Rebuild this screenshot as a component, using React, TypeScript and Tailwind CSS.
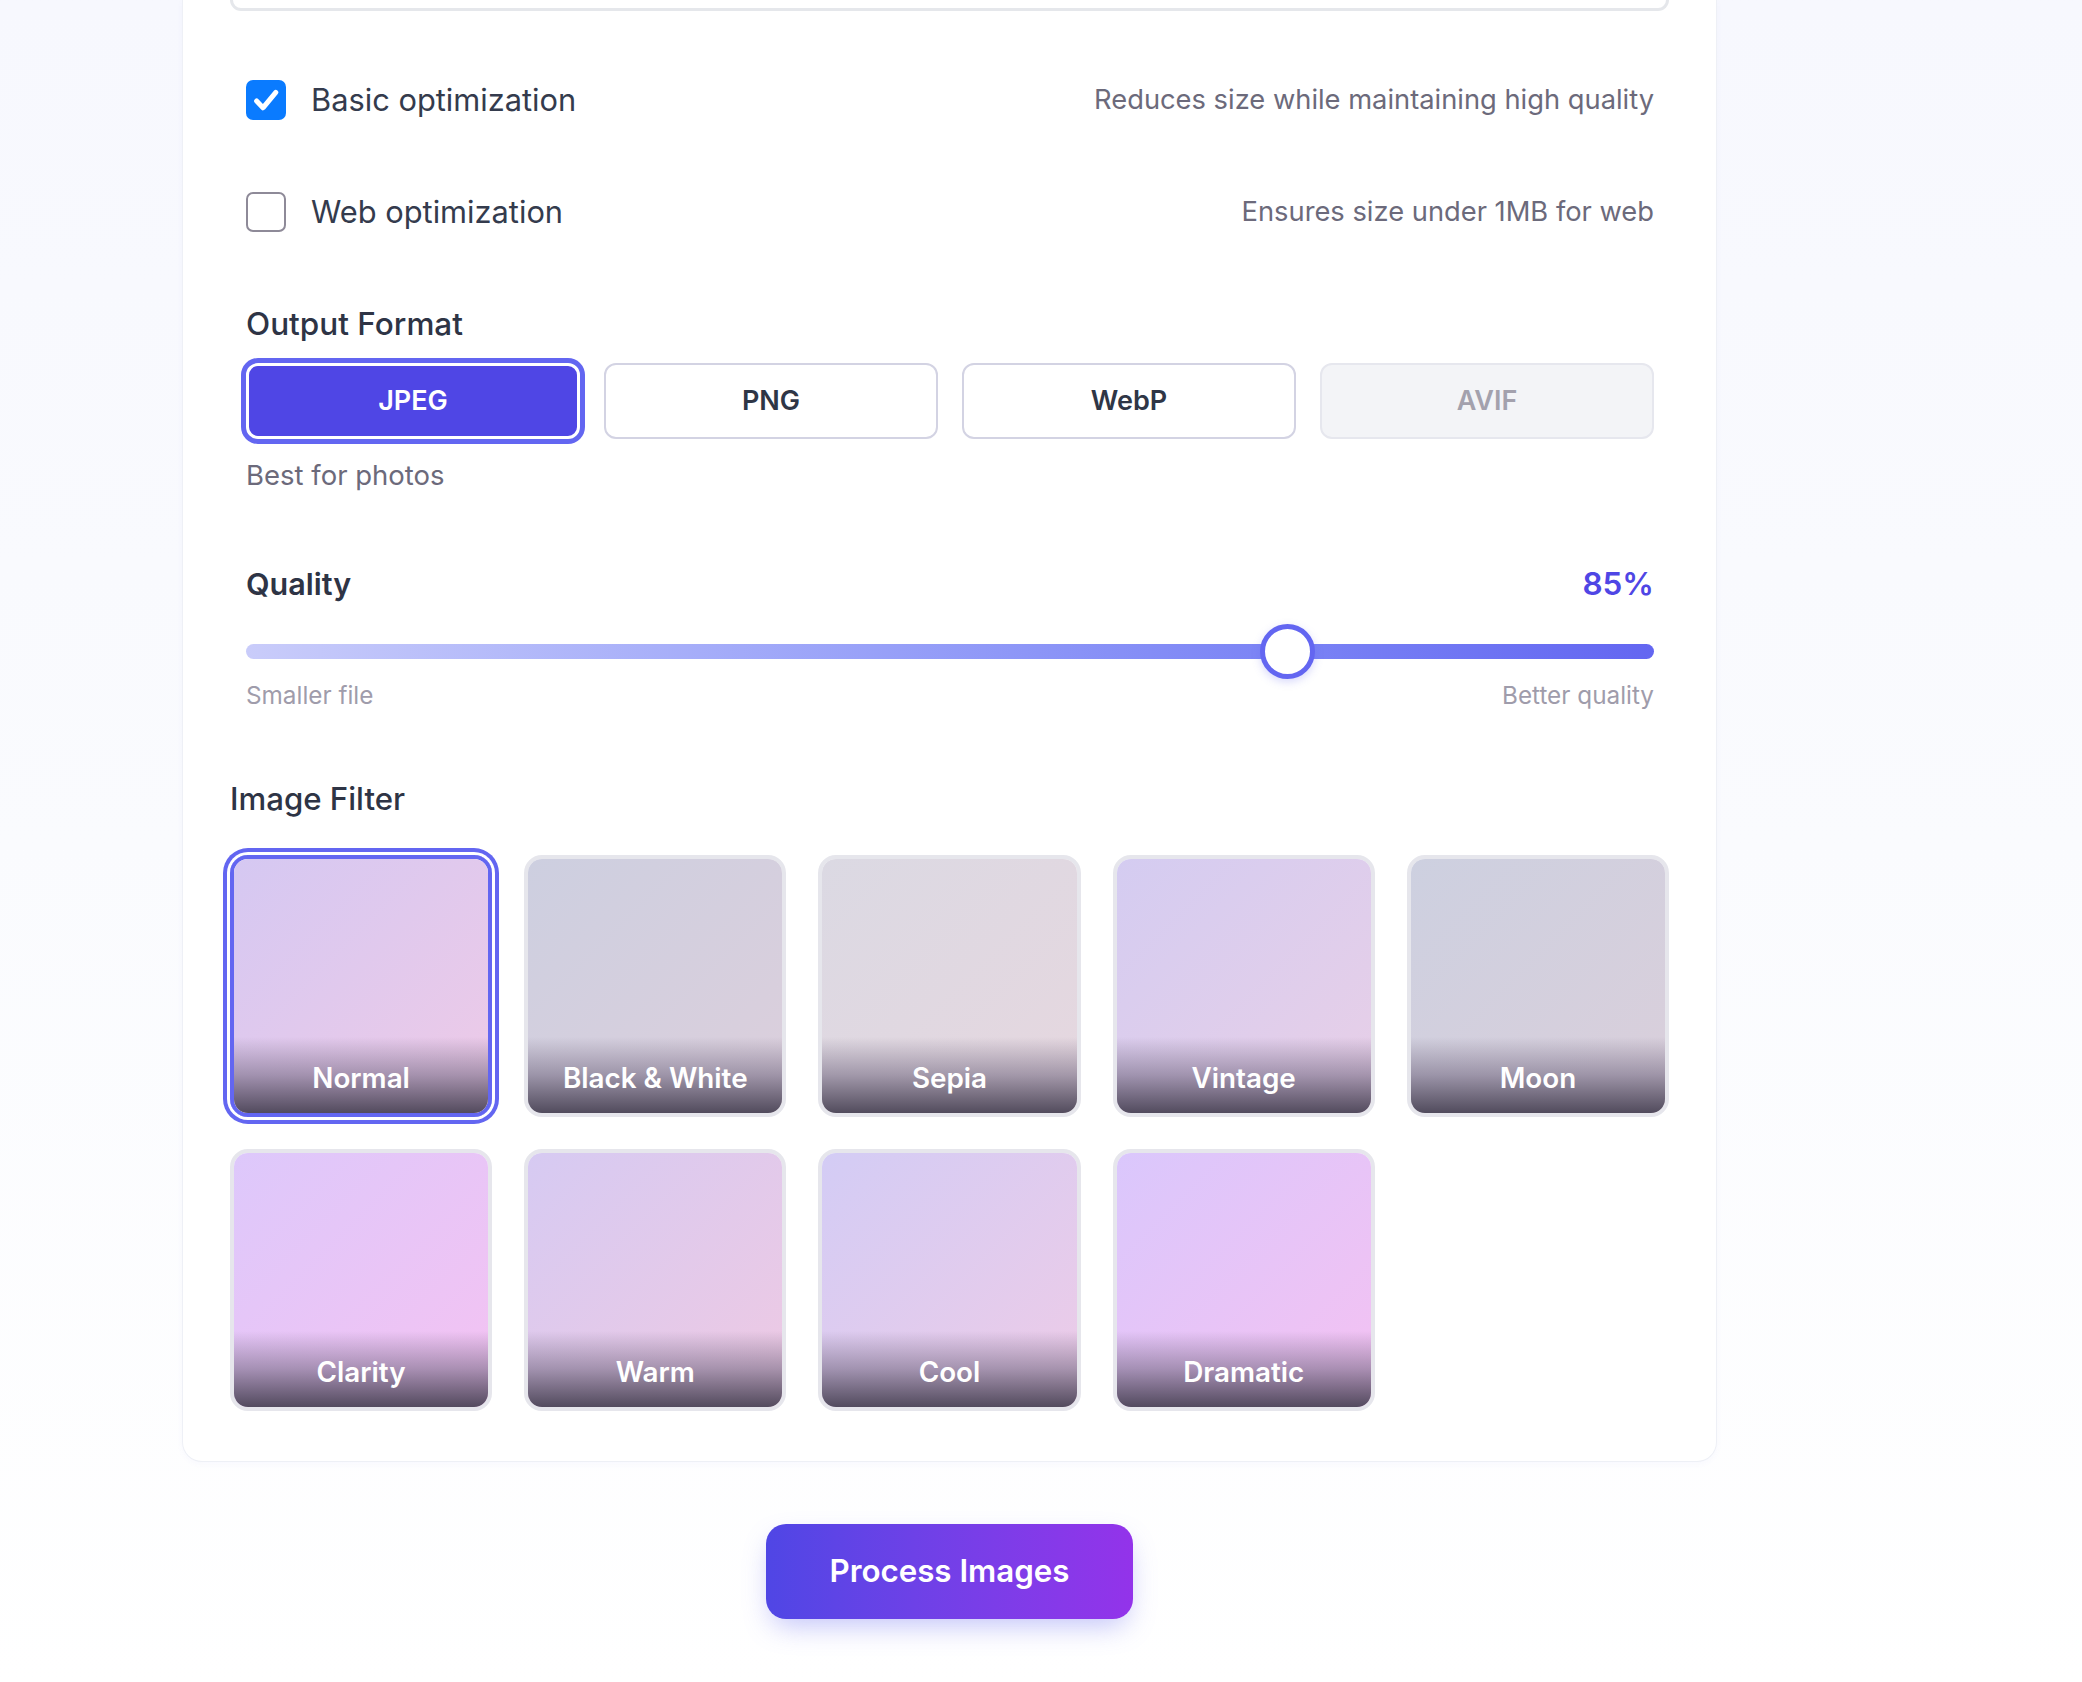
import React from "react";

type Filter = { name: string; bg: string; selected?: boolean };

const filters: Filter[] = [
  { name: "Normal", bg: "bg-linear-to-br from-[#d5c8f2] to-[#eecae7]", selected: true },
  { name: "Black & White", bg: "bg-linear-to-br from-[#cdcfe0] to-[#dccfdc]" },
  { name: "Sepia", bg: "bg-linear-to-br from-[#dbd9e3] to-[#e6d7df]" },
  { name: "Vintage", bg: "bg-linear-to-br from-[#d4ccf1] to-[#e8cfe7]" },
  { name: "Moon", bg: "bg-linear-to-br from-[#cdd0e0] to-[#dacfdb]" },
  { name: "Clarity", bg: "bg-linear-to-br from-[#ddc8fb] to-[#f4c2f2]" },
  { name: "Warm", bg: "bg-linear-to-br from-[#d6caf2] to-[#eec9e3]" },
  { name: "Cool", bg: "bg-linear-to-br from-[#d3ccf5] to-[#edcbe7]" },
  { name: "Dramatic", bg: "bg-linear-to-br from-[#dac7fc] to-[#f4c1f2]" },
];

function Checkbox({ checked }: { checked: boolean }) {
  if (checked) {
    return (
      <div className="w-[40px] h-[40px] rounded-[7px] bg-[#0a7bff] flex items-center justify-center shrink-0">
        <svg width="32" height="32" viewBox="0 0 16 16" fill="none">
          <path d="M3.3 8.5 L6.5 11.9 L12.9 4.2" stroke="white" strokeWidth="2.5" strokeLinecap="round" strokeLinejoin="round" />
        </svg>
      </div>
    );
  }
  return <div className="w-[40px] h-[40px] rounded-[7px] border-[2.5px] border-[#8e8a98] bg-white shrink-0" />;
}

function OptionRow({ checked, label, desc, className }: { checked: boolean; label: string; desc: string; className: string }) {
  return (
    <div className={"flex items-center justify-between h-[40px] " + className}>
      <div className="flex items-center gap-[25px]">
        <Checkbox checked={checked} />
        <span className="text-[30.8px] leading-[40px] text-[#343b4d]">{label}</span>
      </div>
      <span className="text-[27.3px] leading-[36px] text-[#6c6a7b]">{desc}</span>
    </div>
  );
}

export default function App() {
  return (
    <div className="w-[2082px] min-h-[1682px] bg-linear-to-b from-[#f7f8fe] via-[#fafbfe] to-white font-['Inter','Noto_Sans',sans-serif]">
      <div className="w-[1535px] ml-[182px]">
        <div className="bg-white rounded-b-[20px] border border-t-0 border-[#eef0f6] shadow-[0_2px_6px_rgba(99,102,241,0.04)] px-[47px] pb-[50px]">
          <div className="h-[11px] border-[3px] border-t-0 border-[#e5e7eb] rounded-b-[14px]" />

          <div className="pl-[16px] pr-[15px]">
            <OptionRow
              className="mt-[69px]"
              checked={true}
              label="Basic optimization"
              desc="Reduces size while maintaining high quality"
            />
            <OptionRow
              className="mt-[72px]"
              checked={false}
              label="Web optimization"
              desc="Ensures size under 1MB for web"
            />

            <div className="mt-[72px] text-[31.5px] leading-[40px] font-medium text-[#2e3445]">Output Format</div>
            <div className="mt-[19px] grid grid-cols-4 gap-[24px]">
              <div className="h-[76px] rounded-[12px] bg-[#4f46e5] border-[3px] border-white ring-[5px] ring-[#6366f1] flex items-center justify-center text-[27px] font-semibold text-white">
                JPEG
              </div>
              <div className="h-[76px] rounded-[12px] bg-white border-2 border-[#d3d3e3] flex items-center justify-center text-[27px] font-semibold text-[#2f3646]">
                PNG
              </div>
              <div className="h-[76px] rounded-[12px] bg-white border-2 border-[#d3d3e3] flex items-center justify-center text-[27px] font-semibold text-[#2f3646]">
                WebP
              </div>
              <div className="h-[76px] rounded-[12px] bg-[#f3f4f7] border-2 border-[#e6e7ee] flex items-center justify-center text-[27px] font-semibold text-[#a3a1ad]">
                AVIF
              </div>
            </div>
            <div className="mt-[18px] text-[27.5px] leading-[36px] text-[#6c6a7b]">Best for photos</div>

            <div className="mt-[71px] flex items-center justify-between h-[40px]">
              <span className="text-[30.5px] leading-[40px] font-semibold text-[#2e3445]">Quality</span>
              <span className="text-[31.5px] leading-[40px] font-semibold text-[#4f46e5]">85%</span>
            </div>
            <div className="mt-[20px] relative h-[55px] flex items-center">
              <div className="w-full h-[15px] rounded-full bg-linear-to-r from-[#c9ccfa] to-[#6366f1]" />
              <div className="absolute left-[1014px] top-0 w-[55px] h-[55px] rounded-full bg-white border-[5px] border-[#6366f1] shadow-[0_3px_8px_rgba(99,102,241,0.25)]" />
            </div>
            <div className="mt-0 flex justify-between text-[24.3px] leading-[32px] text-[#9f9cab]">
              <span>Smaller file</span>
              <span>Better quality</span>
            </div>
          </div>

          <div className="mt-[68px] text-[31.2px] leading-[40px] font-medium text-[#2e3445]">Image Filter</div>
          <div className="mt-[36px] grid grid-cols-5 gap-[32px]">
            {filters.map((f) => (
              <div
                key={f.name}
                className={
                  "relative aspect-square rounded-[18px] border-4 overflow-hidden " +
                  (f.selected
                    ? "border-[#6366f1] ring-4 ring-[#6366f1] ring-offset-[3px] ring-offset-white"
                    : "border-[#e6e6ec]")
                }
              >
                <div className={"absolute inset-0 " + f.bg} />
                <div className="absolute inset-x-0 bottom-0 h-[76px] bg-linear-to-t from-[rgba(70,64,82,0.92)] via-[rgba(110,100,125,0.55)] to-transparent flex items-end justify-center pb-[17px]">
                  <span className="text-[27.8px] leading-[36px] font-semibold text-white">{f.name}</span>
                </div>
              </div>
            ))}
          </div>
        </div>

        <div className="mt-[62px] flex justify-center">
          <div className="w-[367px] h-[95px] rounded-[20px] bg-linear-to-r from-[#4f46e5] to-[#9333ea] shadow-[0_12px_28px_-6px_rgba(99,102,241,0.4)] flex items-center justify-center text-[31.3px] font-semibold text-white">
            Process Images
          </div>
        </div>
      </div>
    </div>
  );
}
